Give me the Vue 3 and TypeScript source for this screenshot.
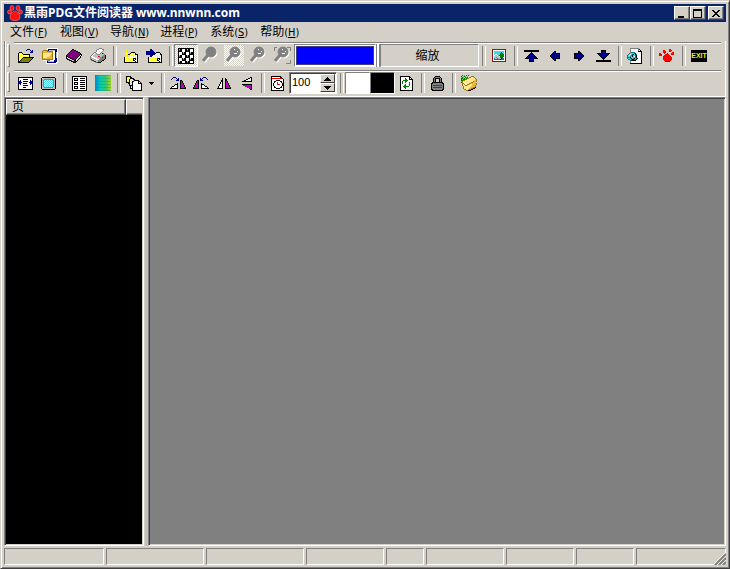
<script setup lang="ts">
import { defineComponent, h, ref } from 'vue'

const palette: Record<string, string> = {
  k: '#000000', w: '#ffffff', y: '#ffff30', Y: '#f0f000', o: '#808000', b: '#000090', B: '#2040d0',
  p: '#800080', m: '#c000c0', g: '#808080', s: '#c0c0c0', r: '#ff0000', R: '#901010', c: '#40d8e8',
  t: '#008080', G: '#008000', n: '#a87800', e: '#e8b840', f: '#ffe890', d: '#404040', q: '#a8d8d8',
  l: '#80c820', v: '#ffffb0',
}

const sprites: Record<string, string[]> = {
  open: [
    '.........bbb....', '........b...b.b.', '.............bb.', '.kkk........bbb.', 'kywyk...........',
    'kwywykkkkkkk....', 'kywywywywywk....', 'kwywywywywyk....', 'kywywkkkkkkkkkkk', 'kwywkoooooooook.',
    'kywkoooooooook..', 'kwkoooooooook...', 'kkoooooooook....', 'kkkkkkkkkkk.....',
  ],
  archive: [
    '.....wwwwwwwwwww', '.....wbbbbbbbbbw', '.nnnnnbssssssbbw', 'neeeennnnnnwwbbw', 'neeeeeeeeenwwbsw',
    'nfffffffffnwwbsw', 'nffffffffenwwbsw', 'nfffffffeenwwbsw', 'nffffffeeenwwbsw', 'nffffeeeeenwwbsw',
    'neeeeeeeeenwwbbw', 'nnnnnnnnnnnwwbbw', '.wwwwgggwwwwbbbw', '....wbssssssbbbw', '....wbbbbbbbbbww',
    '....wwwwwwwwwww.',
  ],
  book: [
    '......kk........', '.....kppkk......', '....kpppppkk....', '...kppppppppkk..', '..kpppppppppppk.',
    '.kppppppppppppkk', 'kppppppppppppkwk', 'kkppppppppppkwk.', 'kwkkpppppppkwsk.', 'kpwskkppppkwsk..',
    '.kkpwskkpkwsk...', '...kkpwskkwk....', '.....kkppkk.....', '.......kkk......',
  ],
  print: [
    '.........ggg....', '.......ggwwwgg..', '......gwwwwwwg..', '......gwwswwg...', '....ggwwwwwg....',
    '...gwsgwwwgskg..', '..gwsssgggssssg.', '.gwssssssssssggk', 'gwwsssssrrssgggk', 'gswwwsssssggGggk',
    'gssswwwsssgggggk', 'gdsssswwwgggggk.', '.gddssssggggkk..', '...gddssgggk....', '.....ggdkkk.....',
  ],
  newFolder: [
    '....Y...........', '.Y..Y..Y........', '..Y.Y.Y.........', '...YYY...kkkk...', 'YYYYwYYYkywywk..',
    '...YYYkkywywykkk', '..Y.Y.Yywywywywk', '.Y..Y..ywywywywk', '..kywywywywywywk', '..kwywywywykkkwk',
    '..kywywywywkwkyk', '..kwywywywykkwwk', '..kywywywywywkyk', '..kkkkkkkkkkkkkk',
  ],
  moveFolder: [
    '....bb..........', '....bbb.........', 'bbbbbbbb........', 'bbbbbbbbb.kkkk..', 'bbbbbbbbbkywywk.',
    'bbbbbbbbkywywykk', '....bbbwywywywyk', '....bbwywywywywk', '..kywywywywywywk', '..kwywywywykkkwk',
    '..kywywywywkwkyk', '..kwywywywykkwwk', '..kywywywywywkyk', '..kkkkkkkkkkkkkk',
  ],
  checker: [
    'kkkkkkkkkkkkkkkk', 'kqkkwwwkkqkkwwwk', 'ktkkwwwkktkkwwwk', 'kkkkwwwkkkkkwwwk', 'kwwwkqkkwwwkqkkk',
    'kwwwktkkwwwktkkk', 'kwwwkkkkwwwkkkkk', 'kqkkwwwkkqkkwwwk', 'ktkkwwwkktkkwwwk', 'kkkkwwwkkkkkwwwk',
    'kwwwkqkkwwwkqkkk', 'kwwwktkkwwwktkkk', 'kwwwkkkkwwwkkkkk', 'kqkkwwwkkqkkwwwk', 'ktkkwwwkktkkwwwk',
    'kkkkkkkkkkkkkkkk',
  ],
  image: [
    'RRRRRRRRRRRRRR', 'RwwwwwwwwwwwwR', 'RwccccccccccwR', 'RwcccccccGccwR', 'RwccccccGGGcwR', 'RwcwwcccGGGGwR',
    'RwwsswcGGGGGwR', 'RwssssswGGGGwR', 'RwssgsssGGGwwR', 'RwtsstssskttwR', 'RwttttttktttwR', 'RwwwwwwwwwwwwR',
    'RRRRRRRRRRRRRR',
  ],
  first: [
    'kkkkkkkkkkkkkkk', 'kkkkkkkkkkkkkkk', '.......k.......', '......kbk......', '.....kbbbk.....', '....kbbbbbk....',
    '...kbbbbbbbk...', '..kbbbbbbbbbk..', '.kkkkkbbbkkkkk.', '.....kbbbk.....', '.....kbbbk.....', '.....kkkkk.....',
  ],
  prev: [
    '....kk....', '...kbk....', '..kbbkkkkk', '.kbbbbbbbk', 'kbbbbbbbbk', 'kbbbbbbbbk', '.kbbbbbbbk', '..kbbkkkkk',
    '...kbk....', '....kk....',
  ],
  next: [
    '....kk....', '....kbk...', 'kkkkkbbk..', 'kbbbbbbbk.', 'kbbbbbbbbk', 'kbbbbbbbbk', 'kbbbbbbbk.', 'kkkkkbbk..',
    '....kbk...', '....kk....',
  ],
  last: [
    '.....kkkkk.....', '.....kbbbk.....', '.....kbbbk.....', '.kkkkkbbbkkkkk.', '..kbbbbbbbbbk..', '...kbbbbbbbk...',
    '....kbbbbbk....', '.....kbbbk.....', '......kbk......', '.......k.......', 'kkkkkkkkkkkkkkk', 'kkkkkkkkkkkkkkk',
  ],
  web: [
    '...ggggggggg....', '...gwwwwwwwgk...', '...gwwwwwwwgwk..', '...gwwwwwwwkkkk.', '...gttttwwwwwwk.', '..tcccctkwwwwwk.',
    '.tcwctkcktwwwwk.', 'tcwctkcctkwwwwk.', 'tcctckcwtkwwwwk.', 'tttkcccctkwwwwk.', 'tcctkctkctkwwwk.', '.ttctkkttkwwwwk.',
    '...tkkkkkwwwwwk.', '...gwwwwwwwwwwk.', '...gwwwwwwwwwwk.', '...kkkkkkkkkkkk.',
  ],
  paw: [
    '..........rr....', '....rr....rrr...', '....rrr...rr....', '....rrr......rr.', 'rr...r..R...rrr.', 'rrr...rrrr..rrr.',
    'rrr..rrrrrr.....', '....rrrrrrrr....', '....rrrrrrrrr...', '....rrrrrrrrr...', '....rrrrrrrrr...', '.....rrrrrrr....',
    '......RRRRR.....',
  ],
  fitWidth: [
    'kkkkkkkkkkkkkkk', 'kwwwwwwwwwwwwwk', 'kwwwwkkkkkwwwwk', 'kwbwwwwwwwwwbwk', 'kbbwwkkkkkwwbbk', 'bbbbwwwwwwwbbbb',
    'kbbwwkkkkwwwbbk', 'kwbwwwwwwwwwbwk', 'kwwwwkkkkkwwwwk', 'kwwwwwwwwwwwwwk', 'kwwwwkkkwwwwwwk', 'kwwwwwwwwwwwwwk',
    'kkkkkkkkkkkkkkk',
  ],
  fitPage: [
    '.kkkkkkkkkkkkk.', 'ksssssssssssssk', 'kssgggggggggssk', 'ksgcwcwcwcwcgsk', 'ksgwcwcwcwcwgsk', 'ksgcwcwcwcwcgsk',
    'ksgwcwcwcwcwgsk', 'ksgcwcwcwcwcgsk', 'ksgwcwcwcwcwgsk', 'ksgcwcwcwcwcgsk', 'kssgggggggggssk', 'ksssssssssssssk',
    '.kkkkkkkkkkkkk.',
  ],
  list: [
    'kkkkkkkkkkkkkkk', 'kwwwwwwwwwwwwwk', 'kwkkkkwwkkkkkwk', 'kwkwwkwwwwwwwwk', 'kwkkkkwwkkkkkwk', 'kwwwwwwwwwwwwwk',
    'kwkkkkwwkkkkkwk', 'kwkwwkwwwwwwwwk', 'kwkkkkwwkkkkkwk', 'kwwwwwwwwwwwwwk', 'kwkkkkwwkkkkkwk', 'kwkwwkwwwwwwwwk',
    'kwkkkkwwkkkkkwk', 'kwwwwwwwwwwwwwk', 'kkkkkkkkkkkkkkk',
  ],
  pages: [
    'kkkkk...........', 'kYwYkk..........', 'kwYwkkkk........', 'kYwkYwYkk.......', 'kwYkwYwYkkkkk...', 'kYwkYwkkwwwwkk..',
    'kkkkwYkwwwwwkwk.', '..kkYwkwwwwwkkkk', '...kwYkwwwwwwwwk', '...kkkkwwwwwwwwk', '....kYkwwwwwwwwk', '....kwkwwwwwwwwk',
    '....kkkwwwwwwwwk', '......kwwwwwwwwk', '......kkkkkkkkkk',
  ],
  down: ['kkkkk', '.kkk.', '..k..'],
  rotateRight: [
    '...bbb..........', '..b...b.b.......', '.b.....bb.......', '......bbb.kk....', '..........kmk...', '..........kmk...',
    '.......k..kmmk..', '.....kkk..kmmk..', '....kwwk..kmmmk.', '..kkwwwk..kmmmk.', '.kwwwwwk..kmmmmk', 'kkkkkkkk..kkkkkk',
  ],
  rotateLeft: [
    '..........bbb...', '.......b.b...b..', '.......bb.....b.', '....kk.bbb......', '...kmk..........', '...kmk..........',
    '..kmmk..k.......', '..kmmk..kkk.....', '.kmmmk..kwwk....', '.kmmmk..kwwwkk..', 'kmmmmk..kwwwwwk.', 'kkkkkk..kkkkkkkk',
  ],
  mirror: [
    '.....k..k.....', '.....k..kk....', '....kk..kk....', '....kk..kmk...', '...kwk..kmk...', '...kwk..kmmk..', '..kwwk..kmmk..',
    '..kwwk..kmmmk.', '.kwwwk..kmmmk.', '.kwwwk..kmmmmk', 'kkkkkk..kkkkkk',
  ],
  flip: [
    '.........kk', '.......kkwk', '.....kkwwwk', '...kkwwwwwk', '.kkkkkkkkkk', '...........', '...........', '.kkkkkkkkkk',
    '..pmmmmmmmk', '....pmmmmmk', '......pmmmk', '........pmk', '.........kk',
  ],
  clock: [
    'kkkkkkkkkk...', 'kwwwwwwwwkk..', 'krrrrrrrrrrk.', 'kwwwwwwwwwwwk', 'kwwwwkkkkwwwk', 'kwwkkwwwwkkwk', 'kwwkwwrwwwkwk',
    'kwkwwwrwwwwkk', 'kwkwwwrrrwwkk', 'kwkwwwwwwwwkk', 'kwwkwwwwwwkwk', 'kwwkkwwwwkkwk', 'kwwwwkkkkwwwk', 'kwwwwwwwwwwwk',
    'kkkkkkkkkkkkk',
  ],
  refresh: [
    'kkkkkkkkkk...', 'kwwwwwwwwkk..', 'kwwwwGwwwkwk.', 'kwwwwGGwwkkkk', 'kwwGGGGGwwwwk', 'kwGwwGGwwwwwk', 'kwGwwGwwwGwwk',
    'kwGwwwwwwGwwk', 'kwwwwGwwwGwwk', 'kwwwGGwwwGwwk', 'kwwGGGGGGwwwk', 'kwwwGGwwwwwwk', 'kwwwwGwwwwwwk', 'kwwwwwwwwwwwk',
    'kkkkkkkkkkkkk',
  ],
  lock: [
    '....kkkkk....', '...kgggggk...', '..kgkkkkkgk..', '..kgk...kgk..', '..kgk...kgk..', '..kgk...kgk..', '.kkkkkkkkkkk.',
    'kkgggggggggkk', 'kgggggggggggk', 'kgdddddddddgk', 'kgggggggggggk', 'kgdddddddddgk', 'kgggggggggggk', 'kkgggggggggkk',
    '.kkkkkkkkkkk.',
  ],
  favorite: [
    '.G.l.G.G........', 'G.lGl.l...nnn...', 'lGl.GlG.nnffen..', 'GGlGlGnnffffffn.', 'GlGGnnffffffffen', 'GGnnfffffffffeen',
    'lnffffffffffneen', 'GnvvffffffnneeeN', '.nnvvfffnneeeeen', '.nfnvvnneffeeeen', '.nffnneffffeeen.', '..nfffffffeeeen.',
    '..nffffffeeennk.', '..nfffffeennkk..', '...nnffennkk....', '.....nnkkk......',
  ],
}

// Draws a sprite as horizontal one-pixel runs of equal colour.
const Glyph = defineComponent({
  props: { name: { type: String, required: true } },
  setup(props) {
    return () => {
      const rows = sprites[props.name]
      const width = Math.max(...rows.map((r) => r.length))
      const runs: ReturnType<typeof h>[] = []
      rows.forEach((row, y) => {
        for (let x = 0; x < row.length; ) {
          let end = x + 1
          while (row[end] === row[x]) end++
          const fill = palette[row[x]]
          if (fill) runs.push(h('rect', { x, y, width: end - x, height: 1, fill }))
          x = end
        }
      })
      return h('svg', { width, height: rows.length, viewBox: `0 0 ${width} ${rows.length}`, 'shape-rendering': 'crispEdges', 'aria-hidden': 'true' }, runs)
    }
  },
})

const menus = [
  { label: '文件', key: 'F' }, { label: '视图', key: 'V' }, { label: '导航', key: 'N' },
  { label: '进程', key: 'P' }, { label: '系统', key: 'S' }, { label: '帮助', key: 'H' },
]
const fileTools = [['open', 'archive', 'book', 'print'], ['newFolder', 'moveFolder']]
const lenses = [0, 1, 2, 3]
const activeLens = ref(1)
const zoom = ref('100')
const step = (delta: number) => { zoom.value = String(Number(zoom.value) + delta) }
const statusPanes = ['xl', 'lg', 'lg', 'md', 'xs', 'md', 'sm', 'st', 'rest']
</script>

<template>
  <div class="window">
    <header class="title">
      <svg class="logo" width="16" height="16" viewBox="0 0 16 16" aria-hidden="true">
        <g fill="#ff1010" stroke="#ff9090" stroke-width=".5">
          <ellipse cx="5" cy="3" rx="2" ry="2.5" /><ellipse cx="11" cy="3" rx="2" ry="2.5" />
          <circle cx="2.5" cy="7" r="2" /><circle cx="13.5" cy="7" r="2" />
          <path d="M8 6C10 6 13 9 13 12C13 15 11 15.500 8 15.500C5 15.500 3 15 3 12C3 9 6 6 8 6Z" />
        </g>
      </svg>
      <h1>黑雨PDG文件阅读器 www.nnwnn.com</h1>
      <div class="controls">
        <button type="button" aria-label="最小化"><svg width="12" height="10"><path d="M2 7h6v2H2z" /></svg></button>
        <button type="button" aria-label="最大化"><svg width="12" height="10"><path d="M1 0h9v9H1zM2 2v6h7V2z" fill-rule="evenodd" /></svg></button>
        <button type="button" class="close" aria-label="关闭"><svg width="12" height="10"><path d="M2 1h2v1h1v1h2V2h1V1h2v1H9v1H8v1H7v1h1v1h1v1h1v1H8V7H7V6H5v1H4v1H2V7h1V6h1V5h1V4H4V3H3V2H2z" /></svg></button>
      </div>
    </header>

    <nav class="menu">
      <button v-for="m in menus" :key="m.key" type="button">{{ m.label }}<span>(<u>{{ m.key }}</u>)</span></button>
    </nav>

    <div class="rebar">
      <div class="band">
        <i class="grip" />
        <div class="tools">
          <template v-for="(group, i) in fileTools" :key="i">
            <button v-for="name in group" :key="name" type="button" :aria-label="name"><Glyph :name="name" /></button>
            <i class="sep" />
          </template>
          <button type="button" class="pressed dither" aria-label="checker"><Glyph name="checker" /></button>
          <button v-for="i in lenses" :key="i" type="button" class="lens" :class="{ dither: i === activeLens }" aria-label="lens" @click="activeLens = i">
            <svg width="20" height="19" viewBox="0 0 20 19" aria-hidden="true">
              <g fill="#fff" stroke="#fff"><circle cx="12" cy="7" r="5" /><path d="M9 10L4 16" stroke-width="3" /></g>
              <g fill="#808080" stroke="#808080"><circle cx="11" cy="6" r="5" /><path d="M8 9L3 15" stroke-width="3" /></g>
              <path v-if="i > 0" d="M10 3h1v1h-1zM13 5h1v1h-1zM10 7h3v1h-3z" fill="#fff" shape-rendering="crispEdges" />
              <path v-if="i === 3" d="M2.500 5V1.500H5M15 1.500H18.500V5M18.500 14V17.500H14" fill="none" stroke="#808080" />
            </svg>
          </button>
          <div class="color-field"><div /></div>
          <i class="double" />
          <button type="button" class="zoom-label">缩放</button>
          <i class="sep" />
          <button type="button" aria-label="image"><Glyph name="image" /></button>
          <i class="sep" />
          <button v-for="name in ['first', 'prev', 'next', 'last']" :key="name" type="button" :aria-label="name"><Glyph :name="name" /></button>
          <i class="sep" />
          <button type="button" aria-label="web"><Glyph name="web" /></button>
          <i class="sep" />
          <button type="button" aria-label="paw"><Glyph name="paw" /></button>
          <i class="sep" />
          <button type="button"><span class="exit">EXIT</span></button>
        </div>
      </div>

      <div class="band second">
        <i class="grip" />
        <div class="tools compact">
          <button type="button" aria-label="fit width"><Glyph name="fitWidth" /></button>
          <button type="button" aria-label="fit page"><Glyph name="fitPage" /></button>
          <i class="sep" />
          <button type="button" aria-label="list"><Glyph name="list" /></button>
          <button type="button" aria-label="gradient">
            <svg width="16" height="16" viewBox="0 0 16 16" aria-hidden="true">
              <defs>
                <linearGradient id="spectrum"><stop offset="0" stop-color="#0088e0" /><stop offset=".35" stop-color="#00d0b0" /><stop offset=".7" stop-color="#40c860" /><stop offset="1" stop-color="#b0d820" /></linearGradient>
              </defs>
              <rect width="16" height="16" fill="url(#spectrum)" />
              <path d="M0 .5H16M0 3.500H16M0 6.500H16M0 9.500H16M0 12.500H16M0 15.500H16" stroke="#008080" stroke-opacity=".3" />
            </svg>
          </button>
          <i class="sep" />
          <button type="button" aria-label="pages"><Glyph name="pages" /></button>
          <button type="button" class="drop" aria-label="more"><Glyph name="down" /></button>
          <i class="sep" />
          <button v-for="name in ['rotateRight', 'rotateLeft', 'mirror', 'flip']" :key="name" type="button" :aria-label="name"><Glyph :name="name" /></button>
          <i class="sep" />
          <button type="button" aria-label="clock"><Glyph name="clock" /></button>
          <div class="spin">
            <input v-model="zoom" type="text" aria-label="缩放">
            <div>
              <button type="button" aria-label="增加" @click="step(1)"><svg width="7" height="4"><path d="M3 0h1v1h1v1h1v1h1v1H0V3h1V2h1V1h1z" /></svg></button>
              <button type="button" aria-label="减少" @click="step(-1)"><svg width="7" height="4"><path d="M0 0h7v1H6v1H5v1H4v1H3V3H2V2H1V1H0z" /></svg></button>
            </div>
          </div>
          <i class="sep" />
          <button type="button" class="swatch white" aria-label="white" />
          <button type="button" class="swatch" aria-label="black" />
          <button type="button" aria-label="refresh"><Glyph name="refresh" /></button>
          <i class="sep" />
          <button type="button" aria-label="lock"><Glyph name="lock" /></button>
          <i class="sep" />
          <button type="button" aria-label="favorite"><Glyph name="favorite" /></button>
        </div>
      </div>
    </div>

    <main>
      <aside>
        <table>
          <thead><tr><th class="page">页</th><th /></tr></thead>
        </table>
      </aside>
      <section />
    </main>

    <footer>
      <div v-for="(size, i) in statusPanes" :key="i" class="pane" :class="size" />
      <svg class="sizer" width="13" height="13" viewBox="0 0 13 13" aria-hidden="true">
        <path d="M0 13L13 0M4 13L13 4M8 13L13 8" stroke="#fff" />
        <path d="M2 13L13 2M6 13L13 6M10 13L13 10" stroke="#808080" stroke-width="2" />
      </svg>
    </footer>
  </div>
</template>

<style>
body { margin: 0; background: #d4d0c8; }
</style>

<style scoped>
* { box-sizing: border-box; }
.window {
  display: flex; flex-direction: column; height: 100vh; padding: 3px;
  border: 1px solid; border-color: #d4d0c8 #404040 #404040 #d4d0c8;
  box-shadow: inset 1px 1px #fff, inset -1px -1px #808080;
  background: #d4d0c8; color: #000;
  font: 12px/16px "DejaVu Sans Condensed", "Noto Sans CJK SC", sans-serif;
}
button, input { margin: 0; padding: 0; border: 0; background: none; color: inherit; font: inherit; }
svg { display: block; }

.title { display: flex; align-items: center; flex: none; height: 18px; padding: 0 2px 0 3px; background: #0a246a; color: #fff; }
h1 { flex: 1; margin: 0 0 0 1px; font: bold 12px/18px "Noto Sans", "Noto Sans CJK SC", sans-serif; white-space: nowrap; }
.controls { display: flex; }
.controls button {
  width: 16px; height: 14px; padding: 2px 0 0 1px; background: #d4d0c8; border: 1px solid; border-color: #fff #404040 #404040 #fff;
  box-shadow: inset -1px -1px #808080;
}
.controls .close { margin-left: 2px; }

.menu { display: flex; flex: none; height: 19px; }
.menu button { min-width: 50px; padding: 1px 5px 0 6px; text-align: left; white-space: nowrap; line-height: 18px; }
.menu span { font-size: 11px; }

.rebar { flex: none; height: 56px; border: solid; border-width: 0 1px 1px; border-color: #fff #fff #fff #808080; box-shadow: inset 1px 0 #fff; }
.band { display: flex; height: 28px; padding: 1px 4px 0 2px; gap: 4px; }
.second { height: 27px; }
.grip { width: 3px; height: 23px; margin-top: 2px; border: 1px solid; border-color: #fff #808080 #808080 #fff; }
.second .grip { height: 20px; }
.tools { display: flex; flex: 1; align-items: center; border-top: 1px solid #808080; box-shadow: inset 0 1px #fff; padding-bottom: 1px; }
.tools button { display: flex; flex: none; align-items: center; justify-content: center; width: 24px; height: 23px; }
.tools.compact button { width: 23px; }
.sep { flex: none; width: 8px; height: 20px; padding-left: 3px; }
.sep::before { content: ""; display: block; width: 2px; height: 100%; border-left: 1px solid #808080; border-right: 1px solid #fff; }
.tools .pressed { border: 1px solid; border-color: #808080 #fff #fff #808080; }
.dither { background: repeating-conic-gradient(#fff 0 25%, #d4d0c8 0 50%) 0 0 / 2px 2px; }
.tools .lens.dither { background-clip: content-box; padding: 1px 2px; }
.color-field { flex: none; width: 82px; height: 23px; padding: 1px; border: 1px solid; border-color: #808080 #fff #fff #808080; background: #fff; }
.color-field div { height: 100%; background: #00f; border: 1px solid #404080; }
.double { flex: none; width: 4px; height: 23px; border: 1px solid #808080; border-width: 0 1px; background: #fff; }
.tools .zoom-label { width: 99px; padding-right: 4px; border: 1px solid; border-color: #808080 #fff #fff #808080; }
.exit { width: 16px; height: 12px; background: #000; color: #e8f800; font: bold 7px/12px "Liberation Sans", sans-serif; text-align: center; }
.tools.compact .drop { width: 13px; }
.spin { display: flex; flex: none; width: 48px; height: 22px; padding: 1px; border: 1px solid; border-color: #808080 #fff #fff #808080; box-shadow: inset 1px 1px #404040; background: #fff; }
.spin input { flex: 1; min-width: 0; height: 16px; padding-left: 1px; font: 11px/16px "Liberation Sans", sans-serif; }
.spin div { display: grid; width: 15px; grid-template-rows: 1fr 1fr; }
.tools .spin button { width: 15px; height: 9px; background: #d4d0c8; border: 1px solid; border-color: #fff #404040 #404040 #fff; }
.tools.compact .swatch { width: 25px; height: 22px; background: #000; border: 1px solid; border-color: #808080 #fff #fff #808080; }
.tools.compact .white { background: #fff; }

main { display: flex; flex: 1; gap: 4px; min-height: 0; background: linear-gradient(#c0c0c0, #c0c0c0) 141px 0 / 3px 100% no-repeat; }
aside, section { border: 1px solid; border-color: #808080 #fff #fff #808080; box-shadow: inset 1px 1px #404040, inset -1px -1px #d4d0c8; padding: 1px; }
aside { flex: none; width: 140px; background: #000; }
section { flex: 1; background: #808080; }
table { width: 100%; border-collapse: separate; border-spacing: 0; table-layout: fixed; }
th { height: 16px; padding: 0; background: #d4d0c8; border: 1px solid; border-color: #fff #404040 #404040 #fff; box-shadow: inset -1px -1px #808080; font-weight: normal; text-align: left; line-height: 14px; }
th:last-child { border-right: 0; box-shadow: inset 0 -1px #808080; }
th.page { width: 120px; padding-left: 5px; }

footer { position: relative; display: flex; flex: none; gap: 2px; height: 19px; padding-top: 2px; }
.pane { flex: none; height: 17px; border: 1px solid; border-color: #808080 #fff #fff #808080; }
.xl { width: 100px; }
.lg { width: 98px; }
.md { width: 78px; }
.sm { width: 68px; }
.st { width: 58px; }
.xs { width: 38px; }
.rest { flex: 1; }
.sizer { position: absolute; right: 0; bottom: 0; background: linear-gradient(135deg, transparent 50%, #d4d0c8 50%); }
</style>
